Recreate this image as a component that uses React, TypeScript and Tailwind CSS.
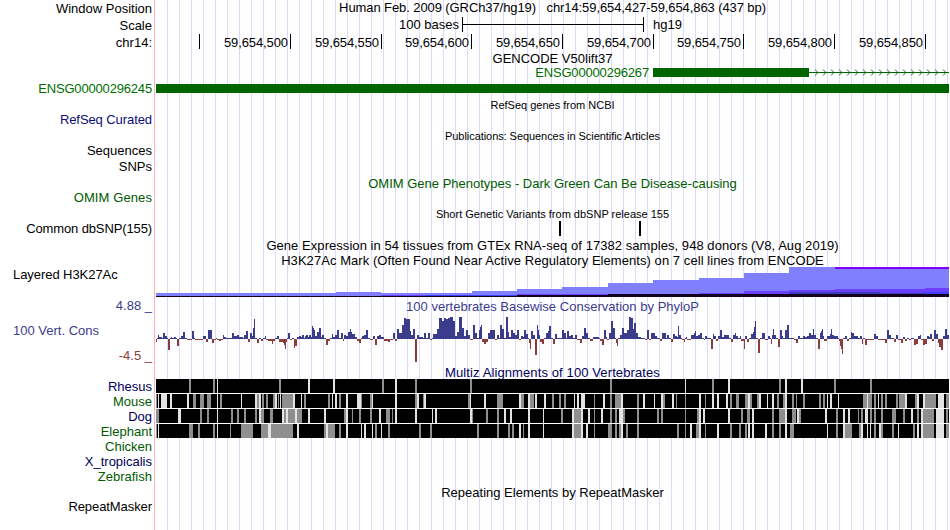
import { ReactNode } from "react";

type Step = [number, number];

interface SideLabel {
  text: string;
  className: string;
}

// Left column, top to bottom. Margins are the gaps between tracks.
const sideLabels: SideLabel[] = [
  { text: "Window Position", className: "h-[17px] text-black" },
  { text: "Scale", className: "h-[17px] pb-px text-black" },
  { text: "chr14:", className: "h-[17px] text-black" },
  { text: "ENSG00000296245", className: "mt-[30px] h-4 pb-0.5 tracking-[-0.17px] text-[#006e00]" },
  { text: "RefSeq Curated", className: "mt-[15px] h-4 pb-0.5 tracking-[-0.08px] text-[#0c0c78]" },
  { text: "Sequences", className: "mt-[15px] h-4 pb-0.5 text-black" },
  { text: "SNPs", className: "h-4 pb-0.5 text-black" },
  { text: "OMIM Genes", className: "mt-[15px] h-4 pb-0.5 tracking-[0.1px] text-[#005a00]" },
  { text: "Common dbSNP(155)", className: "mt-[15px] h-4 pb-0.5 tracking-[-0.12px] text-black" },
  { text: "Layered H3K27Ac", className: "mt-[30px] h-4 justify-start pb-0.5 tracking-[-0.06px] text-black" },
  { text: "4.88 _", className: "mt-[15px] h-4 pb-0.5 text-[#3c3c8c]" },
  { text: "100 Vert. Cons", className: "mt-[9px] h-4 justify-start pb-0.5 text-[#3c3c8c]" },
  { text: "-4.5 _", className: "mt-[9px] h-4 pb-0.5 text-[#8c3c3c]" },
  { text: "Rhesus", className: "mt-[15px] h-[15px] text-[#00005a]" },
  { text: "Mouse", className: "h-[15px] text-[#005a00]" },
  { text: "Dog", className: "h-[15px] text-[#00005a]" },
  { text: "Elephant", className: "h-[15px] text-[#005a00]" },
  { text: "Chicken", className: "h-[15px] text-[#005a00]" },
  { text: "X_tropicalis", className: "h-[15px] text-[#00005a]" },
  { text: "Zebrafish", className: "h-[15px] text-[#005a00]" },
  { text: "RepeatMasker", className: "mt-[15px] h-4 pb-0.5 tracking-[-0.08px] text-black" },
];

const rulerCells = [
  { label: "", className: "w-[44px]" },
  { label: "59,654,500", className: "w-[91px]" },
  { label: "59,654,550", className: "w-[91px]" },
  { label: "59,654,600", className: "w-[90px]" },
  { label: "59,654,650", className: "w-[91px]" },
  { label: "59,654,700", className: "w-[91px]" },
  { label: "59,654,750", className: "w-[90px]" },
  { label: "59,654,800", className: "w-[91px]" },
  { label: "59,654,850", className: "w-[91px]" },
];

// [x, score]: each score holds until the next x
const phyloP: Step[] = [
  [156, -3], [157, 1], [158, 4], [159, 2], [162, 1], [163, 6], [165, 3], [167, 1], [168, -11], [170, 1], [171, 2], [172, 1], [174, 2], [176, 1],
  [177, -7], [179, 1], [181, 3], [183, 7], [185, 1], [187, -1], [192, 8], [194, 1], [195, -1], [203, 3], [206, -3], [208, 9], [212, -4], [214, -1], [216, 1], [217, -1], [219, -2], [221, -1],
  [223, 4], [224, 2], [226, 1], [232, 6], [234, 3], [237, 4], [239, 2], [243, 1], [244, 4], [246, 8], [248, -3], [250, 6], [252, 3], [253, 11], [254, 20], [255, 1],
  [257, -4], [259, 1], [261, -2], [263, 1], [265, 3], [266, -1], [268, -2], [272, -5], [273, -2], [275, 1], [277, 3], [279, -3], [283, -4], [284, -6], [285, -10], [286, -3], [287, 1], [288, 6], [290, -1], [292, 1],
  [294, -9], [295, -7], [297, 2], [299, 3], [301, 2], [302, 4], [304, 1], [305, 3], [306, 4], [308, 2], [309, 4], [311, 2], [312, 13], [313, 11], [314, 9], [315, 3], [317, 7], [319, 11], [321, 2], [322, 4], [324, 1],
  [326, -6], [328, -2], [330, 1], [332, 5], [333, 2], [335, 4], [337, 9], [339, 1], [341, 6], [343, -2], [344, 4], [346, 3], [348, 7], [350, 10], [351, 7], [352, 5], [355, 2], [357, -2], [359, -4], [361, 1], [362, 3], [364, 4], [366, 9], [368, 1], [370, -1],
  [373, 3], [375, -6], [377, 3], [379, 4], [381, 2], [384, -2], [388, -3], [390, -1], [393, 6], [395, -2], [397, 10], [399, 6], [402, 14], [404, 21], [406, 20], [410, 8], [411, 4], [413, 10], [415, -23],
  [417, 4], [419, 2], [423, 1], [424, 6], [426, 1], [428, 6], [430, -1], [432, 1], [433, 5], [437, 10], [439, 21], [442, 18], [444, 21], [446, 20], [448, 21], [450, 22], [453, 18], [455, 3], [457, 7], [459, 22], [462, 11], [464, 3], [466, 9], [468, 4], [470, -1],
  [473, 14], [475, 6], [477, 1], [479, 9], [480, 12], [481, 14], [482, -3], [484, -5], [486, -3], [488, 6], [490, 9], [495, -1], [497, 4], [499, 1], [500, 14], [502, 10], [504, 1], [506, 22], [508, 7], [509, 2],
  [511, 9], [513, 6], [515, 4], [517, 9], [519, -1], [521, 3], [523, 2], [524, 9], [526, 5], [528, 1], [529, -4], [530, -10], [531, 8], [533, 4], [535, -16], [537, 14], [538, 9], [539, 4], [540, -3], [542, -5], [544, 1], [546, 6], [548, 8], [549, 13], [551, 1],
  [553, -5], [555, 5], [557, 1], [562, 9], [564, 6], [566, 1], [567, 8], [569, 3], [571, 4], [573, 1], [575, 4], [577, -1], [580, -4], [582, 3], [584, 11], [586, 6], [588, 1], [590, -2], [593, 2], [599, 1], [600, -2], [602, -6], [604, 9], [606, 2], [607, -1], [609, 6], [611, 18], [613, 11], [615, 1], [616, -4], [617, -7], [618, 1],
  [620, 4], [622, 11], [624, 6], [627, 9], [629, 22], [631, 21], [633, 10], [634, 16], [636, 6], [638, 2], [641, 1], [645, -1], [647, 9], [649, -1], [651, 6], [655, 3], [657, 1], [660, -2], [662, 6], [666, 1], [667, 4], [669, 1], [671, -3], [673, 5], [675, 3], [677, 2], [678, 13], [679, 4], [681, 1],
  [682, -1], [684, -3], [685, 1], [686, 2], [687, -1], [691, 4], [694, 6], [695, 8], [696, 3], [698, 4], [700, 6], [702, 1], [704, -1], [705, 3], [707, 1], [711, -10], [713, 5], [714, 3], [716, -2], [718, 3], [720, 9], [722, 2], [724, 4], [729, 1],
  [731, -3], [733, 4], [735, 6], [736, 3], [738, 1], [740, 3], [741, -2], [744, -10], [745, 3], [747, -3], [749, 1], [751, 5], [753, 7], [754, 12], [755, 18], [756, 1], [758, -14], [760, 1], [762, 6], [765, -1], [768, 3], [770, 1],
  [771, -5], [772, 4], [773, 10], [774, 4], [776, 1], [778, -8], [780, 9], [782, 3], [783, 1], [785, 9], [787, 14], [789, 1], [794, -1], [796, -4], [798, 3], [800, 1], [803, 3], [805, 2], [807, 3], [809, 6], [811, 4], [813, 10], [814, 4], [816, 1],
  [818, -10], [820, 6], [821, 8], [822, 10], [823, 3], [824, -2], [827, 3], [830, 5], [831, 10], [832, 4], [834, 3], [838, 1], [839, -2], [840, -7], [841, -10], [842, -15], [843, 1], [845, 3], [847, -2], [849, 1], [851, 7], [852, 6], [854, 3], [858, 1],
  [860, 3], [862, -5], [863, 1], [865, -6], [867, -1], [874, 5], [876, 3], [878, -1], [885, -4], [887, 9], [889, 4], [891, 1], [894, -3], [896, 4], [898, -1], [901, -4], [903, 2], [905, -2], [907, 1], [909, -1], [911, 1], [914, -6], [916, -5], [918, 3], [920, 4], [921, -1],
  [923, -6], [925, -5], [927, 3], [929, 2], [930, 5], [932, -2], [934, 9], [936, 5], [938, -4], [939, -8], [941, -11], [943, 3], [945, 10], [947, 4], [949, 0],
];

// H3K27Ac signal, [x, top of the step]
const h3k27Layers: { fill: string; steps: Step[] }[] = [
  {
    fill: "#8080ff",
    steps: [[156, 293], [336, 292], [381, 293], [472, 291], [517, 289], [562, 287], [608, 283], [653, 280], [699, 278], [744, 273], [789, 267], [949, 297]],
  },
  { fill: "#6a3fff", steps: [[381, 295], [517, 294], [699, 293], [744, 291], [789, 290], [835, 289], [925, 288], [949, 297]] },
  { fill: "#3f3fff", steps: [[426, 295], [472, 295], [517, 297], [925, 292], [949, 297]] },
  { fill: "#3c3cbe", steps: [[789, 292], [880, 293], [925, 294], [949, 297]] },
  { fill: "#140020", steps: [[156, 296], [517, 295], [608, 294], [949, 297]] },
];

interface Alignment {
  species: string;
  weak: Step[];
  gap: Step[];
}

// [x, width] of the weakly aligned and unaligned columns
const alignments: Alignment[] = [
  {
    species: "Rhesus",
    weak: [[189, 2], [213, 2], [279, 2], [382, 2], [415, 2], [470, 2], [610, 2], [712, 2], [779, 2], [834, 2], [870, 2]],
    gap: [[217, 1], [308, 2], [333, 2], [395, 2], [685, 1], [728, 2], [785, 2], [801, 2]],
  },
  {
    species: "Mouse",
    weak: [
      [156, 1], [193, 3], [200, 4], [207, 4], [220, 2], [257, 2], [262, 2], [266, 2], [273, 2], [278, 1], [282, 11], [304, 2], [328, 2], [339, 2], [361, 1], [370, 2],
      [415, 2], [423, 1], [468, 2], [497, 6], [521, 3], [530, 4], [552, 2], [559, 2], [564, 2], [594, 1], [610, 2], [615, 6], [637, 2], [663, 2], [676, 1],
      [685, 1], [705, 1], [730, 2], [736, 3], [745, 3], [750, 2], [757, 2], [777, 2], [783, 2], [792, 2], [796, 1], [803, 2], [819, 2], [823, 2],
      [863, 4], [868, 4], [874, 2], [881, 2], [885, 2], [896, 2], [899, 6], [915, 2], [925, 11], [946, 3],
    ],
    gap: [
      [158, 1], [161, 6], [170, 2], [187, 2], [217, 1], [241, 1], [255, 2], [259, 2], [275, 2], [280, 1], [293, 2], [301, 1], [332, 1], [335, 2], [346, 2], [357, 4], [372, 1], [395, 2],
      [417, 2], [424, 2], [470, 1], [484, 2], [519, 2], [528, 2], [535, 2], [544, 2], [574, 1], [577, 2], [581, 4], [603, 2], [621, 2], [643, 2], [654, 1], [661, 2], [672, 2],
      [699, 2], [712, 2], [717, 2], [726, 2], [748, 2], [759, 2], [767, 1], [772, 2], [785, 2], [827, 1], [830, 2], [838, 1], [867, 1], [878, 1], [905, 2], [917, 2], [923, 2], [938, 6],
    ],
  },
  {
    species: "Dog",
    weak: [
      [156, 3], [200, 2], [207, 2], [231, 2], [237, 2], [244, 2], [255, 2], [261, 3], [270, 3], [284, 2], [288, 7], [297, 5], [344, 2], [352, 1], [359, 2], [370, 2], [386, 4], [392, 1],
      [472, 1], [486, 2], [497, 2], [561, 2], [574, 7], [594, 1], [610, 2], [615, 2], [623, 2], [637, 2], [657, 2], [661, 2],
      [685, 1], [697, 2], [741, 2], [747, 3], [772, 2], [779, 6], [792, 4], [799, 2], [836, 2], [858, 1], [861, 2], [870, 2], [874, 2], [881, 2], [892, 4], [903, 2], [917, 2], [923, 11], [946, 2],
    ],
    gap: [
      [178, 3], [217, 1], [259, 2], [282, 2], [286, 2], [295, 2], [308, 2], [324, 2], [346, 2], [379, 2], [395, 2], [415, 2],
      [432, 1], [435, 2], [470, 2], [504, 2], [510, 2], [528, 2], [543, 1], [572, 2], [581, 2], [588, 2], [601, 2], [619, 4],
      [699, 2], [703, 2], [728, 2], [752, 2], [785, 2], [797, 2], [825, 2], [843, 2], [848, 2], [865, 3], [911, 2], [921, 2], [936, 8],
    ],
  },
  {
    species: "Elephant",
    weak: [
      [156, 1], [189, 4], [198, 2], [213, 2], [230, 1], [241, 12], [261, 7], [271, 22], [324, 2], [328, 7], [339, 2], [375, 2], [388, 2],
      [419, 2], [430, 2], [477, 2], [497, 2], [508, 2], [512, 2], [523, 1], [574, 7], [594, 1], [608, 4], [615, 2], [619, 2], [626, 2], [637, 2], [677, 2],
      [685, 1], [696, 3], [705, 1], [730, 2], [739, 2], [745, 2], [772, 2], [779, 2], [790, 4], [836, 2], [845, 7], [859, 2], [874, 2], [881, 2], [892, 2], [913, 2], [923, 11], [946, 3],
    ],
    gap: [
      [158, 1], [217, 1], [268, 3], [297, 2], [326, 2], [346, 2], [361, 1], [364, 2], [372, 1], [381, 1],
      [519, 2], [528, 2], [543, 1], [572, 2], [581, 2], [586, 2], [621, 2],
      [690, 2], [699, 2], [717, 2], [748, 2], [752, 2], [765, 2], [785, 2], [827, 1], [843, 2], [861, 2], [867, 1], [870, 1], [879, 2], [898, 1], [917, 2], [921, 2], [936, 8],
    ],
  },
];

const intronArrows = Array.from({ length: 17 }, (_, i) => 815 + i * 8);

function TrackTitle({ className, children }: { className: string; children: ReactNode }) {
  return (
    <div className={`flex items-center justify-center whitespace-pre ${className}`}>
      {children}
    </div>
  );
}

function Ruler() {
  return (
    <div className="mt-px flex h-[15px] text-black">
      {rulerCells.map((cell) => (
        <div
          key={cell.className + cell.label}
          className={`flex shrink-0 items-center justify-end border-r border-black pt-px pr-0.5 tracking-[-0.1px] ${cell.className}`}
        >
          {cell.label}
        </div>
      ))}
    </div>
  );
}

function H3K27Plot() {
  return (
    <svg className="block h-[30px] w-[793px]" viewBox="156 267 793 30" shapeRendering="crispEdges">
      {h3k27Layers.map((layer) =>
        layer.steps.slice(0, -1).map(([x, top], i) => (
          <rect
            key={layer.fill + x}
            x={x}
            y={top}
            width={layer.steps[i + 1][0] - x}
            height={297 - top}
            fill={layer.fill}
          />
        ))
      )}
      <rect x={835} y={267} width={114} height={2} fill="#8000ff" />
    </svg>
  );
}

function ConservationPlot() {
  return (
    <svg className="block h-[50px] w-[793px]" viewBox="156 315 793 50" shapeRendering="crispEdges">
      {phyloP.slice(0, -1).map(([x, score], i) => (
        <rect
          key={x}
          x={x}
          y={score > 0 ? 339 - score : 339}
          width={phyloP[i + 1][0] - x}
          height={Math.abs(score)}
          fill={score > 0 ? "#3c3c8c" : "#8c3c3c"}
        />
      ))}
    </svg>
  );
}

function AlignmentRow({ row }: { row: Alignment }) {
  return (
    <svg className="block h-[14px] w-[793px] bg-black" viewBox="156 0 793 14" shapeRendering="crispEdges">
      {row.weak.map(([x, w]) => (
        <rect key={`w${x}`} x={x} y={0} width={w} height={14} fill="#8f8f8f" />
      ))}
      {row.gap.map(([x, w]) => (
        <rect key={`g${x}`} x={x} y={0} width={w} height={14} fill="#e3e3e3" />
      ))}
    </svg>
  );
}

export default function App() {
  return (
    <div className="flex h-[530px] w-[950px] overflow-hidden bg-white font-['Liberation_Sans',Arial,sans-serif] text-[13px] leading-none">
      {/* Track names */}
      <aside className="flex w-[155px] shrink-0 flex-col border-r border-[#ffb4b4] pr-0.5 pl-[13px]">
        {sideLabels.map((label) => (
          <div
            key={label.text}
            className={`flex shrink-0 items-center whitespace-pre ${
              label.className.includes("justify-start") ? "" : "justify-end"
            } ${label.className}`}
          >
            {label.text}
          </div>
        ))}
      </aside>

      {/* Tracks over the guidelines */}
      <main className="ml-px flex w-[793px] shrink-0 flex-col bg-[repeating-linear-gradient(to_right,transparent_0_11px,#dcdcfa_11px_12px)]">
        <TrackTitle className="h-4 pb-0.5 tracking-[-0.09px] text-black">
          {"Human Feb. 2009 (GRCh37/hg19)   chr14:59,654,427-59,654,863 (437 bp)"}
        </TrackTitle>

        <div className="mt-px flex h-4 text-black">
          <span className="flex w-[303px] items-center justify-end pb-0.5">100 bases</span>
          <div className="ml-[3px] flex h-[15px] w-[182px] flex-col border-x border-black">
            <div className="mt-[7px] h-px bg-black" />
          </div>
          <span className="ml-[9px] flex items-center pb-0.5">hg19</span>
        </div>

        <Ruler />

        <TrackTitle className="mt-[2px] h-[15px] text-black">GENCODE V50lift37</TrackTitle>
        <div className="mb-px flex h-[13px] items-center text-[#006e00]">
          <span className="w-[493px] text-right tracking-[-0.17px]">ENSG00000296267</span>
          <div className="ml-1 h-[9px] w-[156px] bg-[#006400]" />
          <svg className="h-[9px] w-[140px]" viewBox="809 68 140 9" fill="none" stroke="#006400">
            <path d="M809 72.5H949" shapeRendering="crispEdges" />
            {intronArrows.map((x) => (
              <path key={x} d={`M${x} 69.5l3 3l-3 3`} strokeWidth={0.9} />
            ))}
          </svg>
        </div>
        <div className="mt-1 h-[9px] bg-[#006400]" />

        <TrackTitle className="mt-[5px] h-4 pb-0.5 text-[11px] text-black">RefSeq genes from NCBI</TrackTitle>
        <TrackTitle className="mt-[15px] h-4 pb-0.5 text-[11px] tracking-[-0.06px] text-black">
          Publications: Sequences in Scientific Articles
        </TrackTitle>
        <TrackTitle className="mt-[31px] h-4 pb-0.5 text-[#005a00]">
          OMIM Gene Phenotypes - Dark Green Can Be Disease-causing
        </TrackTitle>

        <TrackTitle className="mt-[15px] h-[14px] text-[11px] text-black">
          Short Genetic Variants from dbSNP release 155
        </TrackTitle>
        <div className="flex h-[15px] gap-[78px] pl-[403px]">
          <div className="w-0.5 bg-black" />
          <div className="w-0.5 bg-black" />
        </div>

        <TrackTitle className="mt-[2px] h-[15px] tracking-[0.055px] text-black">
          Gene Expression in 54 tissues from GTEx RNA-seq of 17382 samples, 948 donors (V8, Aug 2019)
        </TrackTitle>
        <TrackTitle className="h-[14px] tracking-[0.06px] text-black">
          H3K27Ac Mark (Often Found Near Active Regulatory Elements) on 7 cell lines from ENCODE
        </TrackTitle>
        <H3K27Plot />

        <TrackTitle className="mt-[2px] h-4 pb-0.5 tracking-[0.02px] text-[#3c3c8c]">
          100 vertebrates Basewise Conservation by PhyloP
        </TrackTitle>
        <ConservationPlot />

        <TrackTitle className="h-[14px] tracking-[0.11px] text-[#00005a]">
          Multiz Alignments of 100 Vertebrates
        </TrackTitle>
        <div className="flex flex-col gap-px bg-white">
          {alignments.map((row) => (
            <AlignmentRow key={row.species} row={row} />
          ))}
        </div>

        <TrackTitle className="mt-[47px] h-4 pb-0.5 text-black">Repeating Elements by RepeatMasker</TrackTitle>
      </main>
    </div>
  );
}
